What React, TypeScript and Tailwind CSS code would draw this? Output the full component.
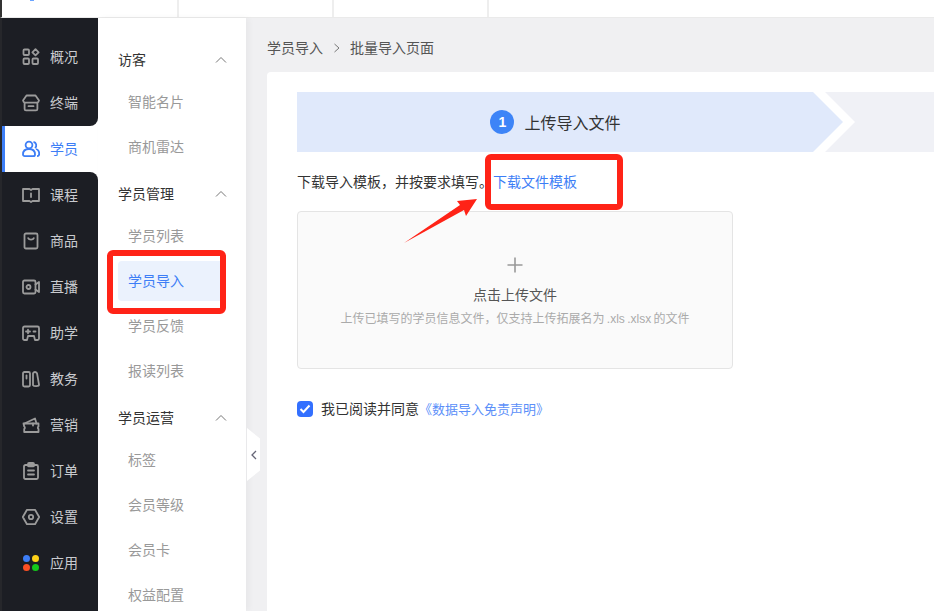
const FONT = "font-['Liberation_Sans','Noto_Sans_CJK_SC',sans-serif]";

function Ico({ children, stroke = "#9b9b9b" }: { children: React.ReactNode; stroke?: string }) {
  return (
    <svg width="18" height="18" viewBox="0 0 18 18" fill="none" stroke={stroke} strokeWidth="1.8" strokeLinecap="round" strokeLinejoin="round">
      {children}
    </svg>
  );
}

const navIcons: Record<string, React.ReactNode> = {
  概况: (
    <Ico>
      <rect x="1.5" y="1.5" width="5.5" height="5.5" rx="1" />
      <path d="M13.5 1.2 16.6 4.3 13.5 7.4 10.4 4.3Z" />
      <rect x="1.5" y="10.5" width="5.5" height="5.5" rx="1" />
      <rect x="10.5" y="10.5" width="5.5" height="5.5" rx="1" />
    </Ico>
  ),
  终端: (
    <Ico>
      <path d="M4.5 1.5h9l3.5 5a2.6 2.6 0 0 1-2 2.2H3A2.6 2.6 0 0 1 1 6.5Z" />
      <path d="M2.6 8.7V15a1.4 1.4 0 0 0 1.4 1.4h10a1.4 1.4 0 0 0 1.4-1.4V8.7" />
      <path d="M6.5 12.2h5" />
    </Ico>
  ),
  课程: (
    <Ico>
      <path d="M1 3h6.5L9 4l1.5-1H17v12h-6.5L9 16l-1.5-1H1Z" />
      <path d="M9 7.5v3.5" />
    </Ico>
  ),
  商品: (
    <Ico>
      <rect x="2.5" y="1.5" width="13" height="15" rx="1.4" />
      <path d="M6.2 6.2c.8 2 4.8 2 5.6 0" />
    </Ico>
  ),
  直播: (
    <Ico>
      <rect x="1" y="2.5" width="12.5" height="13" rx="1.4" />
      <circle cx="6.5" cy="9" r="2" />
      <path d="M13.5 6.5 17 4v10l-3.5-2.5" />
    </Ico>
  ),
  助学: (
    <Ico>
      <path d="M1 4a1.5 1.5 0 0 1 1.5-1.5h13A1.5 1.5 0 0 1 17 4v10.5a1.5 1.5 0 0 1-1.5 1.5H13l-1-4H6l-1 4H2.500A1.5 1.5 0 0 1 1 14.500Z" />
      <path d="M4 7.5h4M6 5.7v3.6M11.5 7.5h2" />
    </Ico>
  ),
  教务: (
    <Ico>
      <rect x="1" y="2" width="7" height="14.5" rx="1.4" />
      <path d="M4.5 5.5v3" />
      <path d="M11 3.2c1-1.6 3-1.6 4 0l2 11.5c0 1.8-5 1.8-6 .5Z" />
    </Ico>
  ),
  营销: (
    <Ico>
      <path d="M2.5 7.5 13 2.5l1.5 5" />
      <path d="M1.5 7.5H16.5V10.5a1.5 1.5 0 0 0 0 2.5V16H2.2V13a1.5 1.5 0 0 0 0-2.5Z" />
      <path d="M11 7.5v2" />
    </Ico>
  ),
  订单: (
    <Ico>
      <rect x="2" y="3" width="14" height="14" rx="1.4" />
      <rect x="6" y="1" width="6" height="3.4" rx="1" />
      <path d="M6 8.5h6M6 12.5h6" />
    </Ico>
  ),
  设置: (
    <Ico>
      <path d="M5 1.8h8L17.2 9 13 16.2H5L.8 9Z" />
      <circle cx="9" cy="9" r="2.2" />
    </Ico>
  ),
};

function NavItem({ label }: { label: string }) {
  return (
    <div className="h-[46px] flex items-center pl-5 gap-[10px] text-sm text-[#c9cbcf]">
      <span className="w-[18px] h-[18px] shrink-0">{navIcons[label]}</span>
      <span>{label}</span>
    </div>
  );
}

function Chevron() {
  return (
    <svg width="12" height="8" viewBox="0 0 12 8" fill="none" stroke="#777" strokeWidth="1">
      <path d="M1 6.5 6 1.5l5 5" />
    </svg>
  );
}

const groups = [
  { title: "访客", items: ["智能名片", "商机雷达"] },
  { title: "学员管理", items: ["学员列表", "学员导入", "学员反馈", "报读列表"] },
  { title: "学员运营", items: ["标签", "会员等级", "会员卡", "权益配置"] },
];

export default function App() {
  return (
    <div className={`relative w-[934px] h-[611px] overflow-hidden flex flex-col bg-[#f0f0f2] ${FONT}`}>
      {/* top tabs */}
      <header className="h-[18px] shrink-0 flex bg-white border-b border-[#eaeaea] border-l-2 border-l-[#333]">
        <div className="w-[177px] border-r-2 border-[#eeeeee] pl-7">
          <div className="w-[4px] h-[1px] bg-[#6aa4ff]" />
        </div>
        <div className="w-[155px] border-r-2 border-[#eeeeee]" />
        <div className="w-[155px] border-r-2 border-[#eeeeee]" />
      </header>

      <div className="flex flex-1 min-h-0">
        {/* dark nav */}
        <nav className="w-[98px] shrink-0 flex flex-col bg-white border-l-2 border-[#26272b]">
          <div className="h-[108px] pt-4 bg-[#1c1e24] rounded-br-lg">
            <NavItem label="概况" />
            <NavItem label="终端" />
          </div>
          <div className="h-[46px] flex items-center pl-[17px] gap-[10px] text-sm text-[#3d7ef6] border-l-[3px] border-[#3d7ef6] bg-white">
            <span className="w-[18px] h-[18px] shrink-0">
              <svg width="18" height="18" viewBox="0 0 18 18" fill="none" stroke="#3d7ef6" strokeWidth="1.8" strokeLinejoin="round">
                <circle cx="7" cy="5" r="3.4" />
                <path d="M11.5 2a3.4 3.4 0 0 1 1.5 6" />
                <path d="M1 14.5C1 11 3.5 9 7 9s6 2 6 5.5c0 1-.7 1.7-1.7 1.7H2.700C1.700 16.200 1 15.500 1 14.500Z" />
                <path d="M14 9c2 .6 3.200 2.600 3.200 5 0 1.300-.7 2.200-2.200 2.200" />
              </svg>
            </span>
            <span>学员</span>
          </div>
          <div className="flex-1 bg-[#1c1e24] rounded-tr-lg">
            {["课程", "商品", "直播", "助学", "教务", "营销", "订单", "设置"].map((l) => (
              <NavItem key={l} label={l} />
            ))}
            <div className="h-[46px] flex items-center pl-5 gap-[10px] text-sm text-[#c9cbcf]">
              <span className="w-[18px] h-[18px] shrink-0 grid grid-cols-2 gap-[2px] p-[1px]">
                <i className="rounded-full bg-[#3d7ef6]" />
                <i className="rounded-full bg-[#fdd118]" />
                <i className="rounded-full bg-[#fb4f24]" />
                <i className="rounded-full bg-[#14c71b]" />
              </span>
              <span>应用</span>
            </div>
          </div>
        </nav>

        {/* sub menu */}
        <aside className="w-[148px] shrink-0 bg-white pt-[22px] flex flex-col gap-[7px] shadow-[3px_0_6px_rgba(0,0,0,0.04)] z-10">
          {groups.map((g) => (
            <div key={g.title}>
              <div className="h-10 flex items-center justify-between pl-5 pr-[19px] text-sm text-[#333]">
                <span>{g.title}</span>
                <Chevron />
              </div>
              <div className="mt-[2px] flex flex-col gap-[5px]">
                {g.items.map((it) =>
                  it === "学员导入" ? (
                    <div key={it} className="h-10 ml-5 mr-5 pl-[10px] flex items-center text-sm text-[#3d7ef6] bg-[#ebf2fd] rounded">
                      {it}
                    </div>
                  ) : (
                    <div key={it} className="h-10 pl-[30px] flex items-center text-sm text-[#999]">
                      {it}
                    </div>
                  ),
                )}
              </div>
            </div>
          ))}
        </aside>

        {/* content */}
        <main className="flex-1 min-w-0 flex flex-col pl-[21px]">
          <div className="h-[54px] pt-[6px] shrink-0 flex items-center text-sm text-[#555]">
            <span>学员导入</span>
            <svg className="ml-[10px] mr-[9px]" width="8" height="10" viewBox="0 0 8 10" fill="none" stroke="#777" strokeWidth="1">
              <path d="M1.500 1 6 5 1.500 9" />
            </svg>
            <span>批量导入页面</span>
          </div>
          <section className="flex-1 bg-white rounded-tl pl-[30px] pt-5">
            <div className="flex h-[60px]">
              <div className="w-[546px] shrink-0 pr-[29px] flex items-center justify-center gap-[10px] bg-[#e0e9fb] [clip-path:polygon(0_0,516px_0,546px_50%,516px_100%,0_100%)]">
                <span className="w-6 h-6 rounded-full bg-[#3d84f7] text-white text-sm font-bold flex items-center justify-center">1</span>
                <span className="pt-1 text-base text-[#333]">上传导入文件</span>
              </div>
              <div className="w-[140px] shrink-0 -ml-[18px] bg-[#f0f1f6] [clip-path:polygon(0_0,100%_0,100%_100%,0_100%,30px_50%)]" />
            </div>
            <p className="mt-5 h-5 leading-5 text-sm text-[#333] whitespace-nowrap">
              下载导入模板，并按要求填写。<span className="text-[#3d7ef6]">下载文件模板</span>
            </p>
            <div className="mt-[19px] w-[436px] h-[158px] bg-[#fafafa] border border-[#e4e4e4] rounded-sm flex flex-col items-center pt-[44px]">
              <svg width="18" height="18" viewBox="0 0 18 18" fill="none" stroke="#999" strokeWidth="1.600">
                <path d="M9 1.500v15M1.500 9h15" />
              </svg>
              <div className="mt-[11px] text-sm leading-5 text-[#555]">点击上传文件</div>
              <div className="mt-1 text-xs leading-5 text-[#aaa] whitespace-nowrap [word-spacing:-1px]">上传已填写的学员信息文件，仅支持上传拓展名为 .xls .xlsx 的文件</div>
            </div>
            <div className="mt-[30px] flex items-center gap-2 text-sm text-[#333]">
              <span className="w-4 h-4 rounded-sm bg-[#3370ff] flex items-center justify-center">
                <svg width="12" height="10" viewBox="0 0 12 10" fill="none" stroke="#fff" strokeWidth="2">
                  <path d="M1.500 5 4.500 8 10.500 1.500" />
                </svg>
              </span>
              <span>
                我已阅读并同意 <span className="-ml-1 text-[13px] text-[#5b8ff9]">《数据导入免责声明》</span>
              </span>
            </div>
          </section>
        </main>
      </div>

      {/* collapse handle */}
      <div className="absolute left-[247px] top-[428px] w-[13px] h-[53px] bg-white flex items-center justify-center z-20 [clip-path:polygon(0_0,100%_20%,100%_80%,0_100%)]">
        <svg width="6" height="10" viewBox="0 0 6 10" fill="none" stroke="#667" strokeWidth="1.300">
          <path d="M5 1 1 5l4 4" />
        </svg>
      </div>

      {/* red annotations */}
      <div className="absolute left-[107px] top-[250px] w-[119px] h-[64px] border-[6px] border-[#ff2317] rounded-md z-30" />
      <div className="absolute left-[485px] top-[154px] w-[138px] h-[56px] border-[6px] border-[#ff2317] rounded-md z-30" />
      <svg className="absolute left-0 top-0 z-30" width="934" height="611" viewBox="0 0 934 611">
        <path d="M404 243 460 205 457 201 477 199 466 216 464 210Z" fill="#ff2317" />
      </svg>
    </div>
  );
}
